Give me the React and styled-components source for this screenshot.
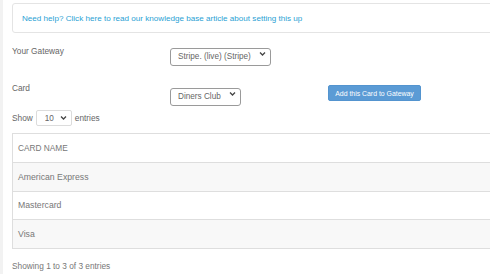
import React from 'react'
import styled, { createGlobalStyle } from 'styled-components'

const GlobalStyle = createGlobalStyle`
body {
  margin: 0;
  background: #fff;
  font-family: "Liberation Sans", Arial, sans-serif;
  overflow: hidden;
}
`;

const cards = ['American Express', 'Mastercard', 'Visa']

const Chevron = () => (
  <svg width="7" height="5" viewBox="0 0 7 5">
    <path d="M1 1l2.5 2.5L6 1" fill="none" stroke="#444" strokeWidth="1.3" />
  </svg>
)

const Dropdown = ({ width, height, small, value }) => (
  <SelectWrap $width={width} $height={height}>
    <SelectBox defaultValue={value} $small={small}>
      <option value={value}>{value}</option>
    </SelectBox>
    <ChevronSpot><Chevron /></ChevronSpot>
  </SelectWrap>
)

const App = () => {
  return (
    <>
      <GlobalStyle />
      <Page>
        <Strip />
        <Content>
          <HelpBox>
            <HelpLink href="#">Need help? Click here to read our knowledge base article about setting this up</HelpLink>
          </HelpBox>
          <FormRow $top={12}>
            <Label $offset={1}>Your Gateway</Label>
            <Dropdown width={101} height={18} value="Stripe. (live) (Stripe)" />
          </FormRow>
          <FormRow $top={22}>
            <Label $offset={-2}>Card</Label>
            <Dropdown width={71} height={18} value="Diners Club" />
            <AddButton>Add this Card to Gateway</AddButton>
          </FormRow>
          <LengthRow>
            Show
            <Dropdown width={36} height={16} small value="10" />
            entries
          </LengthRow>
          <Table>
            <thead>
              <tr>
                <Th>CARD NAME</Th>
              </tr>
            </thead>
            <tbody>
              {cards.map((c, i) => (
                <Tr key={c} $odd={i % 2 === 0}>
                  <Td>{c}</Td>
                </Tr>
              ))}
            </tbody>
          </Table>
          <Info>Showing 1 to 3 of 3 entries</Info>
        </Content>
      </Page>
    </>
  )
}

export default App

const Page = styled.div`
display: flex;
width: 560px;
height: 274px;
`;

const Strip = styled.div`
width: 3px;
background: #f2f2f2;
flex-shrink: 0;
`;

const Content = styled.div`
flex: 1;
padding: 3px 0 0 9px;
`;

const HelpBox = styled.div`
box-sizing: border-box;
height: 30px;
border: 1px solid #e4e4e4;
border-radius: 3px;
display: flex;
align-items: center;
padding-left: 9px;
`;

const HelpLink = styled.a`
color: #2b9fd4;
font-size: 8.1px;
text-decoration: none;
`;

const FormRow = styled.div`
display: flex;
align-items: flex-start;
height: 18px;
margin-top: ${p => p.$top}px;
`;

const Label = styled.div`
width: 158px;
flex-shrink: 0;
font-size: 8.3px;
line-height: 10px;
color: #666;
margin-top: ${p => p.$offset}px;
`;

const SelectWrap = styled.div`
position: relative;
box-sizing: border-box;
width: ${p => p.$width}px;
height: ${p => p.$height}px;
flex-shrink: 0;
`;

const SelectBox = styled.select`
appearance: none;
-webkit-appearance: none;
box-sizing: border-box;
width: 100%;
height: 100%;
margin: 0;
font-family: "Liberation Sans", Arial, sans-serif;
font-size: 8.2px;
color: #666;
border: 1px solid ${p => (p.$small ? '#dcdcdc' : '#9a9a9a')};
border-radius: ${p => (p.$small ? 2 : 3)}px;
background: #fff;
padding: 0 0 0 ${p => (p.$small ? 8 : 7)}px;
outline: none;
`;

const ChevronSpot = styled.span`
position: absolute;
right: 5px;
top: 50%;
transform: translateY(-50%);
display: flex;
pointer-events: none;
`;

const AddButton = styled.button`
box-sizing: border-box;
margin: 0 0 0 87px;
width: 93px;
height: 16px;
padding: 0;
background: #5b9bd5;
color: #fff;
border: 1px solid #5394cf;
border-radius: 2px;
font-family: "Liberation Sans", Arial, sans-serif;
font-size: 6.9px;
`;

const LengthRow = styled.div`
display: flex;
align-items: center;
gap: 3px;
height: 16px;
margin-top: 7px;
font-size: 8.3px;
color: #666;
`;

const Table = styled.table`
margin-top: 7px;
width: 100%;
border-collapse: collapse;
border: 1px solid #dedede;
font-size: 8.7px;
color: #777;
`;

const Th = styled.th`
text-align: left;
font-weight: normal;
font-size: 8.3px;
height: 28px;
padding: 0 5px;
border-bottom: 1px solid #dedede;
`;

const Tr = styled.tr`
background: ${p => (p.$odd ? '#f8f8f8' : '#fff')};
`;

const Td = styled.td`
height: 27.5px;
padding: 0 5px;
border-bottom: 1px solid #dedede;
`;

const Info = styled.div`
margin-top: 12px;
font-size: 8.3px;
color: #777;
`;
